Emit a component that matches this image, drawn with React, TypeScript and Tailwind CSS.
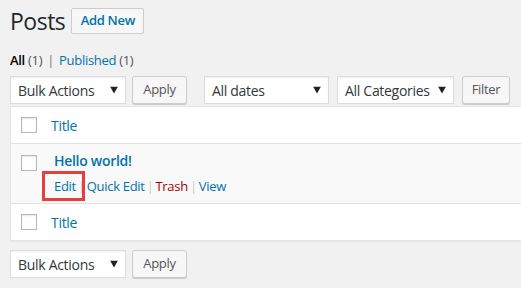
import React from "react"

function Arrow() {
    return (
        <svg width="8" height="7" viewBox="0 0 8 7" className="absolute right-[7px] top-1/2 -translate-y-1/2">
            <polygon points="0,0 8,0 4,7" fill="#222" />
        </svg>
    )
}

function Select({ label, width }) {
    return (
        <div className={`relative h-[28px] ${width} bg-white border border-[#ddd] shadow-[inset_0_1px_2px_rgba(0,0,0,0.07)] flex items-center pl-[7px] text-[14px] text-[#32373c]`}>
            <span>{label}</span>
            <Arrow />
        </div>
    )
}

function Button({ label, width }) {
    return (
        <button className={`h-[28px] ${width} bg-[#f7f7f7] border border-[#ccc] rounded-[3px] shadow-[0_1px_0_#ccc] text-[13px] text-[#555] flex items-center justify-center`}>
            {label}
        </button>
    )
}

function Checkbox() {
    return <span className="block w-[16px] h-[16px] shrink-0 bg-white border border-[#b4b9be] shadow-[inset_0_1px_2px_rgba(0,0,0,0.1)]" />
}

function Sep() {
    return <span className="text-[#ccc] mx-[2px]">|</span>
}

export default function App() {
    return (
        <div className="w-[521px] h-[288px] overflow-hidden bg-[#f1f1f1] pl-[10px] font-['Open_Sans',sans-serif] text-[13px] tracking-[-0.3px] text-[#444]">
            <div className="flex items-center pt-[8px] gap-[6px]">
                <h1 className="text-[23px] leading-[26px] font-normal text-[#23282d] -mt-[1px] tracking-[-0.5px]">Posts</h1>
                <button className="h-[26px] w-[73px] bg-[#f7f7f7] border border-[#ccc] rounded-[2px] text-[13px] font-semibold text-[#0073aa] flex items-center justify-center">
                    Add New
                </button>
            </div>

            <div className="mt-[14px] leading-[24px] text-[#555]">
                <span className="text-black font-semibold">All</span> <span>(1)</span>
                <span className="mx-[5px] text-[#777]">|</span>
                <span className="text-[#0073aa]">Published</span> <span>(1)</span>
            </div>

            <div className="mt-[4px] flex items-center">
                <Select label="Bulk Actions" width="w-[116px]" />
                <div className="ml-[6px]"><Button label="Apply" width="w-[55px]" /></div>
                <div className="ml-[17px]"><Select label="All dates" width="w-[125px]" /></div>
                <div className="ml-[8px]"><Select label="All Categories" width="w-[117px]" /></div>
                <div className="ml-[8px]"><Button label="Filter" width="w-[48px]" /></div>
            </div>

            <div className="mt-[2px] bg-white border border-[#e5e5e5] border-r-0 shadow-[0_1px_1px_rgba(0,0,0,0.04)]">
                <div className="h-[37px] flex items-center border-b border-[#e1e1e1]">
                    <div className="ml-[10px]"><Checkbox /></div>
                    <span className="ml-[14px] text-[14px] text-[#0073aa]">Title</span>
                </div>

                <div className="h-[60px] bg-[#f9f9f9] flex items-start border-b border-[#e1e1e1]">
                    <div className="ml-[10px] mt-[11px]"><Checkbox /></div>
                    <div className="ml-[17px] mt-[7px]">
                        <div className="text-[14px] leading-[20px] font-semibold text-[#0073aa]">Hello world!</div>
                        <div className="mt-[6px] leading-[18px] flex items-center">
                            <span className="relative text-[#0073aa]">
                                Edit
                                <span className="absolute -left-[12px] -right-[9px] -top-[6px] -bottom-[6px] border-[3px] border-[#e53e3e]" />
                            </span>
                            <Sep />
                            <span className="text-[#0073aa]">Quick Edit</span>
                            <Sep />
                            <span className="text-[#a00]">Trash</span>
                            <Sep />
                            <span className="text-[#0073aa]">View</span>
                        </div>
                    </div>
                </div>

                <div className="h-[36px] flex items-center">
                    <div className="ml-[10px]"><Checkbox /></div>
                    <span className="ml-[14px] text-[14px] text-[#0073aa]">Title</span>
                </div>
            </div>

            <div className="mt-[9px] flex items-center">
                <Select label="Bulk Actions" width="w-[116px]" />
                <div className="ml-[6px]"><Button label="Apply" width="w-[55px]" /></div>
            </div>
        </div>
    )
}
